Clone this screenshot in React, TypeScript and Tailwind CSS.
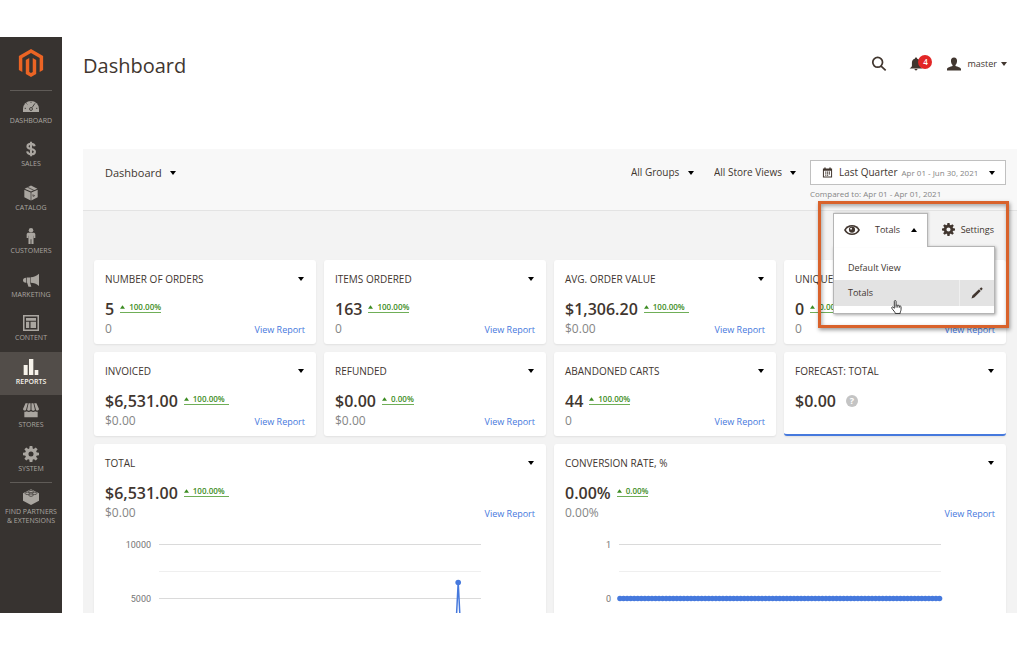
import React from "react";
import { FaMagento } from "react-icons/fa";
import { clsx } from "clsx";

type IconProps = { className?: string };

const Svg: React.FC<IconProps & { children: React.ReactNode }> = ({
  className,
  children,
}) => (
  <svg
    viewBox="0 0 24 24"
    fill="currentColor"
    className={className}
    aria-hidden="true"
  >
    {children}
  </svg>
);

const GaugeIcon: React.FC<IconProps> = ({ className }) => (
  <Svg className={className}>
    <path d="M0 16.500a12 12 0 0 1 24 0V21H0z" />
    <g fill="none" stroke="#373330" strokeWidth="1.300">
      <path d="M12 5.500v1.800M5.200 8.200L6.500 9.500M2.500 15.500h2M19.500 15.500h2M13.500 14.500L18 8" />
      <circle cx="12" cy="16.500" r="2.200" />
    </g>
  </Svg>
);

const DollarIcon: React.FC<IconProps> = ({ className }) => (
  <Svg className={className}>
    <path
      d="M17.500 8c-.6-2.600-2.600-3.700-5.500-3.700-3.100 0-5.300 1.300-5.300 3.800 0 5.400 11.200 2.200 11.200 7.900 0 2.500-2.400 3.800-5.700 3.800-3.400 0-5.500-1.400-6-4.200M12 1v22"
      fill="none"
      stroke="currentColor"
      strokeWidth="3.200"
    />
  </Svg>
);

const BoxIcon: React.FC<IconProps> = ({ className }) => (
  <Svg className={className}>
    <path d="M2 7l9.500 4.200v12L2 18.500zM22 7l-9.500 4.200v12L22 18.500zM12 .8l9.600 4.700L12 9.900 2.400 5.500z" />
    <path
      d="M6.500 3.200l9.800 4.800M15 14v3l3-1.300"
      fill="none"
      stroke="#373330"
      strokeWidth="1.100"
    />
  </Svg>
);

const PersonIcon: React.FC<IconProps> = ({ className }) => (
  <Svg className={className}>
    <circle cx="12" cy="3.400" r="3.400" />
    <path d="M8.300 7h7.400c1.600 0 2.800 1 2.800 2.500V15h-2.300v-3.500h-.4V24h-3.200v-7h-1.200v7H8.200V11.500h-.4V15H5.500V9.500C5.500 8 6.700 7 8.300 7z" />
  </Svg>
);

const MegaphoneIcon: React.FC<IconProps> = ({ className }) => (
  <Svg className={className}>
    <path d="M24 2.500v18.500c-4-3.300-7.500-4.500-12.500-4.700V8C16.500 7.500 20 6 24 2.500zM5.500 8.200h5.200v8.200l1.800 5.600H8.200l-2-5.700h-.7zM4.500 8.500v7.500C1.500 16 0 14.600 0 12.300s1.500-3.800 4.500-3.800z" />
  </Svg>
);

const LayoutIcon: React.FC<IconProps> = ({ className }) => (
  <Svg className={className}>
    <path
      fillRule="evenodd"
      d="M0 0h24v24H0zm2.300 2.300v19.400h19.400V2.300zM4.500 4.500h15v4h-15zm0 5.800h4.800v9.200H4.500zm6.800 0h8.200v9.200h-8.200z"
    />
  </Svg>
);

const BarsIcon: React.FC<IconProps> = ({ className }) => (
  <Svg className={className}>
    <path d="M1 9h6v15H1zM9 0h6.500v24H9zM17.500 16.500H23V24h-5.500z" />
  </Svg>
);

const StoreIcon: React.FC<IconProps> = ({ className }) => (
  <Svg className={className}>
    <path d="M2 14.500c1.300.5 2.500.2 3.600-.6 1.900 1.300 4.300 1.300 6.400 0 2.100 1.300 4.500 1.300 6.400 0 1.100.8 2.300 1.100 3.600.6V23H2zM3.800 2h3.400L4.500 12c-1.700 1.500-4.500.6-4.500-1.500zM8.400 2h2.900v9.800c-1.300 1.700-4.300 1.700-5.200 0zM12.700 2h2.900l2.300 9.800c-.9 1.700-3.900 1.700-5.200 0zM16.800 2h3.400L24 10.500c0 2.100-2.800 3-4.500 1.500z" />
  </Svg>
);

const teeth = [0, 45, 90, 135, 180, 225, 270, 315];

const GearIcon: React.FC<IconProps> = ({ className }) => (
  <Svg className={className}>
    <circle
      cx="12"
      cy="12"
      r="6.300"
      fill="none"
      stroke="currentColor"
      strokeWidth="5"
    />
    {teeth.map((angle) => (
      <path
        key={angle}
        d="M9.300 5L10 0h4l.7 5z"
        transform={`rotate(${angle} 12 12)`}
      />
    ))}
  </Svg>
);

const BrickIcon: React.FC<IconProps> = ({ className }) => (
  <Svg className={className}>
    <path d="M0 6.500l12-6 12 6v11L12 24 0 17.500z" />
    <g fill="currentColor" stroke="#373330" strokeWidth="1.100">
      <ellipse cx="12" cy="3.800" rx="3.300" ry="1.800" />
      <ellipse cx="6.500" cy="6.500" rx="3.300" ry="1.800" />
      <ellipse cx="17.500" cy="6.500" rx="3.300" ry="1.800" />
      <ellipse cx="12" cy="9.200" rx="3.300" ry="1.800" />
    </g>
  </Svg>
);

const SearchIcon: React.FC<IconProps> = ({ className }) => (
  <Svg className={className}>
    <path
      d="M15.500 15.500L22 21.500M17.300 9.500a7.300 7.300 0 1 1-14.600 0 7.300 7.300 0 0 1 14.600 0z"
      fill="none"
      stroke="currentColor"
      strokeWidth="2.600"
    />
  </Svg>
);

const BellIcon: React.FC<IconProps> = ({ className }) => (
  <Svg className={className}>
    <path d="M12 1c1.200 0 2 .8 2 2 3.500.9 5 3.500 5 7v5c0 1.500 1.500 2.700 4 4.500H1C3.500 17.700 5 16.500 5 15v-5c0-3.500 1.500-6.100 5-7 0-1.200.8-2 2-2zM9.500 20.500h5c0 1.600-1 2.500-2.500 2.500s-2.500-.9-2.500-2.500z" />
  </Svg>
);

const UserIcon: React.FC<IconProps> = ({ className }) => (
  <Svg className={className}>
    <path d="M12 1c3.600 0 5.200 2.300 5.200 5.500 0 3-1 5.600-2.700 7.200v1.800c2.800 1.200 9.500 2.200 9.500 5.500v2H0v-2c0-3.300 6.700-4.300 9.500-5.500v-1.800C7.800 12.100 6.800 9.500 6.800 6.500 6.800 3.300 8.400 1 12 1z" />
  </Svg>
);

const CalendarIcon: React.FC<IconProps> = ({ className }) => (
  <Svg className={className}>
    <path
      fillRule="evenodd"
      d="M2 3h3V1h3v2h8V1h3v2h3v20H2zm2.200 5v12.800h15.600V8zM7 10h2.500v2.500H7zm4 0h2.500v2.500H11zm4 0h2.500v2.500H15zm-8 3.700h2.500v2.500H7zm4 0h2.500v2.500H11zm4 0h2.500v2.500H15zM7 17.300h2.500v2H7zm4 0h2.500v2H11z"
    />
  </Svg>
);

const EyeIcon: React.FC<IconProps> = ({ className }) => (
  <Svg className={className}>
    <path d="M0 12c2.500-4.800 7-7.500 12-7.500S21.500 7.200 24 12c-2.500 4.800-7 7.500-12 7.500S2.500 16.800 0 12z" />
    <path
      d="M2.800 12C5 8.500 8 6.700 12 6.700s7 1.800 9.200 5.300C19 15.500 16 17.300 12 17.300S5 15.500 2.800 12z"
      fill="#fff"
    />
    <circle cx="12" cy="11.500" r="4.600" />
    <circle cx="10.600" cy="10" r="1.400" fill="#fff" />
  </Svg>
);

const PencilIcon: React.FC<IconProps> = ({ className }) => (
  <Svg className={className}>
    <path d="M1 23l1.800-6L16 4.500 19.500 8 6.500 21zM17.200 3.400L19.500 1.300c.7-.6 1.500-.6 2.200 0l1 1c.6.700.6 1.500 0 2.200l-2.100 2.300z" />
  </Svg>
);

const HandIcon: React.FC<IconProps> = ({ className }) => (
  <svg viewBox="0 0 12 16" className={className} aria-hidden="true">
    <path
      d="M3.500 9.500V1.700c0-1.500 2-1.500 2 0v4.600c.3-.9 1.900-.8 2 .3.400-.8 1.800-.6 1.900.5.500-.6 1.800-.3 1.800.8v3c0 1.400-1 2.300-1 4.500H4.600c0-1.700-2.500-3.500-3.900-5.900-.7-1.300.7-2.100 1.600-1.200z"
      fill="#fff"
      stroke="#222"
      strokeWidth="1"
    />
    <path d="M5.500 6.300v2.400M7.500 6.600v2.100M9.400 7.100v1.600" stroke="#222" strokeWidth="1" />
  </svg>
);

const Caret: React.FC<IconProps> = ({ className = "h-1 w-1.5" }) => (
  <svg
    viewBox="0 0 6 4"
    fill="currentColor"
    className={clsx("shrink-0", className)}
    aria-hidden="true"
  >
    <path d="M0 0h6L3 4z" />
  </svg>
);

const menu = [
  { name: "Dashboard", icon: GaugeIcon },
  { name: "Sales", icon: DollarIcon },
  { name: "Catalog", icon: BoxIcon },
  { name: "Customers", icon: PersonIcon },
  { name: "Marketing", icon: MegaphoneIcon },
  { name: "Content", icon: LayoutIcon },
  { name: "Reports", icon: BarsIcon, active: true },
  { name: "Stores", icon: StoreIcon },
  { name: "System", icon: GearIcon },
];

const Sidebar: React.FC = () => (
  <nav className="w-[62px] shrink-0 overflow-hidden bg-[#373330] text-[7px] text-[#aaa6a0] uppercase">
    <a href="#" aria-label="Home" className="flex h-[53px] justify-center pt-3">
      <FaMagento className="h-7 w-[26px] text-[#eb6424]" />
    </a>
    <div className="mx-2.5 h-px bg-[#5f5b57]" />
    <ul className="grid h-[391px] grid-rows-9">
      {menu.map((item) => (
        <li key={item.name}>
          <a
            href="#"
            className={clsx(
              "flex h-full flex-col items-center gap-0.5 pt-[7px] leading-[10px]",
              item.active && "bg-[#524d49] font-semibold text-[#f7f3eb]"
            )}
          >
            <item.icon className="h-4 w-4" />
            {item.name}
          </a>
        </li>
      ))}
    </ul>
    <div className="mx-2.5 h-px bg-[#5f5b57]" />
    <a
      href="#"
      className="flex flex-col items-center gap-0.5 pt-1.5 text-center leading-[9px]"
    >
      <BrickIcon className="h-4 w-4" />
      <span className="whitespace-nowrap">
        Find Partners
        <br />& Extensions
      </span>
    </a>
  </nav>
);

const Header: React.FC = () => (
  <header className="flex h-[112px] items-start justify-between pt-[13px] pr-2.5">
    <h1 className="text-[20px] leading-8">Dashboard</h1>
    <div className="flex h-[27px] items-center text-[9px]">
      <button aria-label="Search">
        <SearchIcon className="h-4 w-4" />
      </button>
      <button
        aria-label="Notifications"
        className="relative ml-[22px] flex w-6 items-center"
      >
        <BellIcon className="h-3.5 w-3.5" />
        <span className="absolute -top-0.5 right-px flex h-3.5 w-3.5 items-center justify-center rounded-full bg-[#e22626] text-[8px] font-semibold text-white">
          4
        </span>
      </button>
      <button className="ml-3.5 flex items-center">
        <UserIcon className="h-3.5 w-3.5" />
        <span className="ml-1.5">master</span>
        <Caret className="ml-1 h-1 w-1.5" />
      </button>
    </div>
  </header>
);

const Picker: React.FC<{ label: string; value: string; className?: string }> = ({
  label,
  value,
  className,
}) => (
  <div className={clsx("relative flex h-[25px] items-center", className)}>
    <select
      aria-label={label}
      className="h-full appearance-none bg-transparent pr-3.5 leading-[25px]"
    >
      <option>{value}</option>
    </select>
    <Caret className="pointer-events-none absolute right-0 h-1 w-1.5 text-black" />
  </div>
);

const FilterBar: React.FC = () => (
  <div className="flex items-start justify-between border-b border-[#e3e3e3] bg-[#f8f8f8] pt-[11px] pr-[11px] pb-2.5 pl-[22px] text-[10px]">
    <Picker label="Report" value="Dashboard" className="text-[11px]" />
    <div className="flex">
      <Picker label="Group" value="All Groups" />
      <Picker label="Store view" value="All Store Views" className="ml-5" />
      <div className="ml-3.5 w-[196px]">
        <button className="flex h-[25px] w-full items-center border border-[#c0c0c0] bg-white pr-2.5 pl-[11px]">
          <CalendarIcon className="h-[11px] w-[11px]" />
          <span className="ml-1.5">Last Quarter</span>
          <span className="ml-1 text-[8px] text-[#858585]">
            Apr 01 - Jun 30, 2021
          </span>
          <Caret className="ml-auto h-1 w-1.5 text-black" />
        </button>
        <p className="mt-0.5 text-[8px] leading-[13px] text-[#858585]">
          Compared to: Apr 01 - Apr 01, 2021
        </p>
      </div>
    </div>
  </div>
);

const ViewMenu: React.FC = () => (
  <div className="flex h-[49px] justify-end pt-0.5 pr-[22px] text-[9px]">
    <div className="relative z-10 flex h-[33px] w-[162px]">
      <div className="absolute top-[33px] left-0 w-full border border-[#b5b5b5] bg-white pt-2 pb-[7px] shadow-[1px_1px_3px_rgba(0,0,0,0.35)]">
        <a href="#" className="flex h-[25px] items-center px-3.5">
          Default View
        </a>
        <div className="flex h-[26px] bg-[#e3e3e3]">
          <a href="#" className="flex flex-1 items-center px-3.5">
            Totals
          </a>
          <button
            aria-label="Edit view"
            className="flex w-[35px] items-center justify-center border-l border-[#efefef]"
          >
            <PencilIcon className="h-3 w-3" />
          </button>
        </div>
      </div>
      <button className="relative flex h-[34px] w-[95px] shrink-0 items-center border border-b-0 border-[#b5b5b5] bg-white pb-0.5 pl-2.5 shadow-[1px_-1px_2px_rgba(0,0,0,0.15)]">
        <EyeIcon className="h-4 w-4" />
        <span className="ml-[15px]">Totals</span>
        <Caret className="ml-[11px] h-1 w-1.5 rotate-180 text-black" />
      </button>
      <button className="flex flex-1 items-center justify-end gap-1.5 pr-px">
        <GearIcon className="h-[13px] w-[13px]" />
        Settings
      </button>
      <HandIcon className="absolute top-[87px] left-[58px] h-3.5 w-[11px]" />
      <div className="pointer-events-none absolute -top-3 -right-3.5 -left-[15px] h-[127px] border-[3px] border-[#d9622b] shadow-[1px_2px_4px_rgba(0,0,0,0.4),inset_1px_2px_4px_rgba(0,0,0,0.35)]" />
    </div>
  </div>
);

type Metric = {
  title: string;
  value: string;
  change?: string;
  previous?: string;
  roomy?: boolean;
};

const metrics: Metric[] = [
  { title: "Number of Orders", value: "5", change: "100.00%", previous: "0" },
  { title: "Items Ordered", value: "163", change: "100.00%", previous: "0" },
  {
    title: "Avg. Order Value",
    value: "$1,306.20",
    change: "100.00%",
    previous: "$0.00",
    roomy: true,
  },
  { title: "Unique Visitors", value: "0", change: "0.00%", previous: "0" },
  {
    title: "Invoiced",
    value: "$6,531.00",
    change: "100.00%",
    previous: "$0.00",
    roomy: true,
  },
  { title: "Refunded", value: "$0.00", change: "0.00%", previous: "$0.00" },
  { title: "Abandoned Carts", value: "44", change: "100.00%", previous: "0" },
  { title: "Forecast: Total", value: "$0.00" },
];

const Card: React.FC<{ metric: Metric; children?: React.ReactNode }> = ({
  metric,
  children,
}) => (
  <section
    className={clsx(
      "rounded-[3px] bg-white shadow-[0_1px_2px_rgba(0,0,0,0.08)]",
      children && "col-span-2",
      !metric.change && "border-b-2 border-[#4679dd]"
    )}
  >
    <div className="px-[11px] pt-3 pb-[7px]">
      <div className="flex items-center justify-between">
        <h2 className="text-[10px] leading-[14px] font-medium uppercase">
          {metric.title}
        </h2>
        <button aria-label={`${metric.title} options`} className="py-px pr-px text-black">
          <Caret />
        </button>
      </div>
      <div className="mt-3 flex items-center leading-[22px]">
        <span className="text-[16px] font-semibold">{metric.value}</span>
        {metric.change ? (
          <span
            className={clsx(
              "mb-1 ml-1.5 flex items-center border-b border-[#6fae57] text-[8px] leading-[10px] font-semibold text-[#3c8c22]",
              metric.roomy && "pr-1"
            )}
          >
            <Caret className="mr-1 h-1 w-[5px] rotate-180" />
            {metric.change}
          </span>
        ) : (
          <button
            aria-label="Help"
            className="ml-2.5 flex h-3 w-3 items-center justify-center rounded-full bg-[#c4c4c4] text-[9px] font-bold text-white"
          >
            ?
          </button>
        )}
      </div>
      {metric.previous && (
        <div className="mt-px flex items-center justify-between leading-4">
          <span className="text-[12px] text-[#858585]">{metric.previous}</span>
          <a href="#" className="pt-0.5 text-[9px] leading-[14px] text-[#4679dd]">
            View Report
          </a>
        </div>
      )}
    </div>
    {children}
  </section>
);

const CHART_LEFT = 66;
const CHART_STEP = 3.55;

const Chart: React.FC<{ labels: string[]; baseline: number; points: number[] }> = ({
  labels,
  baseline,
  points,
}) => {
  const coords = points.map((rise, i) => [
    CHART_LEFT + i * CHART_STEP,
    baseline - rise,
  ]);

  return (
    <svg viewBox="0 0 452 150" className="block w-full" role="img">
      {[16, 43, 70, 97, 124].map((y, i) => (
        <path
          key={y}
          d={`M65 ${y + 0.5}h322`}
          stroke={i % 2 ? "#efefef" : "#dadada"}
        />
      ))}
      {labels.map((label, i) => (
        <text
          key={label}
          x="57"
          y={20 + i * 54}
          textAnchor="end"
          className="fill-[#757575] font-['Roboto',sans-serif] text-[9px]"
        >
          {label}
        </text>
      ))}
      <polyline
        points={coords.map((c) => c.join(",")).join(" ")}
        fill="none"
        stroke="#4679dd"
        strokeWidth="1.500"
      />
      {coords.map(([x, y]) => (
        <circle key={x} cx={x} cy={y + 0.5} r="2.800" fill="#4679dd" />
      ))}
    </svg>
  );
};

const days = Array.from({ length: 91 }, (_, i) => i);
const totals = days.map((day) => (day === 84 ? 70 : 0));
const conversion = days.map(() => 0);

const App: React.FC = () => (
  <div className="flex h-screen overflow-hidden bg-white py-[37px] font-['Open_Sans',sans-serif] text-[#41362f]">
    <Sidebar />
    <main className="min-w-0 flex-1 overflow-hidden pr-[7px] pl-[21px]">
      <Header />
      <div className="bg-[#f3f3f3]">
        <FilterBar />
        <ViewMenu />
        <div className="grid grid-cols-4 gap-2 px-[11px] pb-4">
          {metrics.map((metric) => (
            <Card key={metric.title} metric={metric} />
          ))}
          <Card
            metric={{
              title: "Total",
              value: "$6,531.00",
              change: "100.00%",
              previous: "$0.00",
              roomy: true,
            }}
          >
            <Chart labels={["10000", "5000"]} baseline={124} points={totals} />
          </Card>
          <Card
            metric={{
              title: "Conversion Rate, %",
              value: "0.00%",
              change: "0.00%",
              previous: "0.00%",
            }}
          >
            <Chart labels={["1", "0"]} baseline={70} points={conversion} />
          </Card>
        </div>
      </div>
    </main>
  </div>
);

export default App;
